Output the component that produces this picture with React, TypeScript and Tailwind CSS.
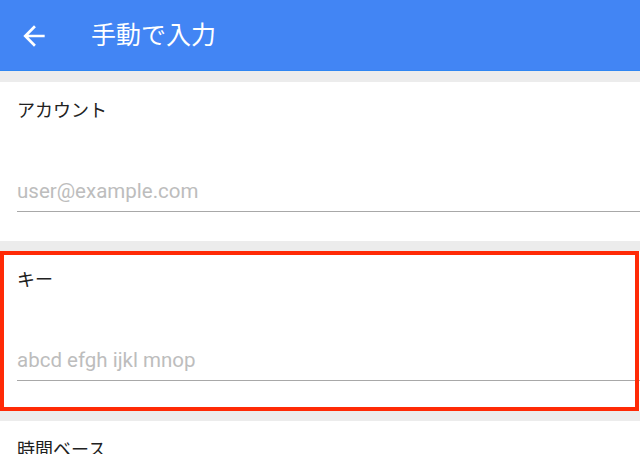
import React from 'react';

const font = { fontFamily: 'Roboto, "Noto Sans CJK JP", sans-serif' };

function ArrowBack() {
  return (
    <svg width="32" height="32" viewBox="0 0 24 24" fill="#ffffff">
      <path d="M20 11H7.83l5.59-5.59L12 4l-8 8 8 8 1.41-1.41L7.83 13H20v-2z" />
    </svg>
  );
}

function Field({ label, placeholder, highlighted }: { label: string; placeholder: string; highlighted?: boolean }) {
  return (
    <div className="relative bg-white h-[160px] shrink-0 pt-[17px] pl-[17px]">
      <div className="text-[18px] leading-[24px] text-[#212121]">{label}</div>
      <div className="mt-[54px] text-[20.5px] leading-[28px] text-[#bdbdbd]">{placeholder}</div>
      <div className="mt-[6px] h-px bg-[#a8a8a8]" />
      {highlighted && <div className="absolute left-0 top-0 bottom-0 right-px border-4 border-[#ff2a06]" />}
    </div>
  );
}

export default function App() {
  return (
    <div className="w-[640px] h-[454px] overflow-hidden bg-[#ececec] flex flex-col" style={font}>
      <div className="h-[71px] shrink-0 bg-[#4285f4] border-b border-[#2f86f2] flex items-center">
        <div className="ml-[18px] mt-px">
          <ArrowBack />
        </div>
        <div className="ml-[41px] mt-[2px] text-[25px] leading-[32px] text-white">手動で入力</div>
      </div>
      <div className="mt-[11px] flex flex-col gap-[10px]">
        <div className="h-[159px] shrink-0 overflow-hidden flex flex-col">
          <Field label="アカウント" placeholder="user@example.com" />
        </div>
        <Field label="キー" placeholder="abcd efgh ijkl mnop" highlighted />
        <Field label="時間ベース" placeholder="" />
      </div>
    </div>
  );
}
